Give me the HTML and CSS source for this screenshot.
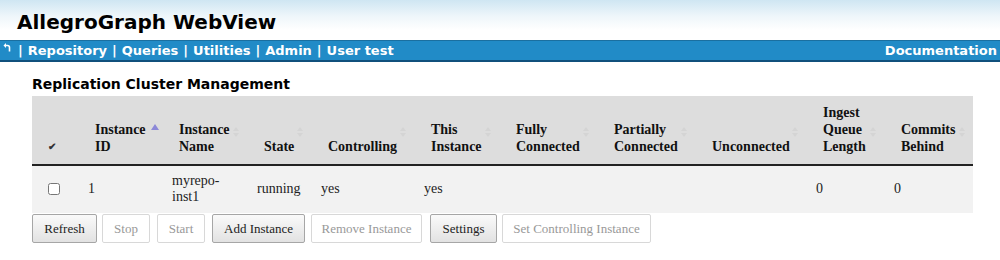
FILE: index.html
```html
<!DOCTYPE html>
<html>
<head>
<meta charset="utf-8">
<link rel="stylesheet" href="styles.css">
</head>
<body>
<header class="top">
  <h1 class="title">AllegroGraph WebView</h1>
</header>
<nav class="menu">
  <div class="menu-left">
    <svg class="back" width="8" height="9" viewBox="0 0 8 9"><path d="M6.5 8.5 V4.5 Q6.5 2.5 4.5 2.5 H2" fill="none" stroke="#fff" stroke-width="1.6"/><path d="M0.5 2.5 L3 0 V5 Z" fill="#fff"/></svg>
    <span class="sep">|</span><a>Repository</a><span class="sep">|</span><a>Queries</a><span class="sep">|</span><a>Utilities</a><span class="sep">|</span><a>Admin</a><span class="sep">|</span><a>User test</a>
  </div>
  <a class="doc">Documentation</a>
</nav>
<main class="content">
  <h2 class="section">Replication Cluster Management</h2>
  <table class="grid">
    <colgroup>
      <col class="c0"><col class="c1"><col class="c2"><col class="c3"><col class="c4"><col class="c5"><col class="c6"><col class="c7"><col class="c8"><col class="c9"><col class="c10">
    </colgroup>
    <thead>
      <tr>
        <th class="chk"><span class="tick">&#10004;</span></th>
        <th class="sorted">Instance<br>ID<span class="asc"></span></th>
        <th>Instance<br>Name<span class="both"></span></th>
        <th>State<span class="both"></span></th>
        <th>Controlling<span class="both"></span></th>
        <th>This<br>Instance<span class="both"></span></th>
        <th>Fully<br>Connected<span class="both"></span></th>
        <th>Partially<br>Connected<span class="both"></span></th>
        <th>Unconnected<span class="both"></span></th>
        <th>Ingest<br>Queue<br>Length<span class="both"></span></th>
        <th>Commits<br>Behind<span class="both"></span></th>
      </tr>
    </thead>
    <tbody>
      <tr>
        <td class="chk"><input type="checkbox"></td>
        <td>1</td>
        <td>myrepo-<br>inst1</td>
        <td>running</td>
        <td>yes</td>
        <td>yes</td>
        <td></td>
        <td></td>
        <td></td>
        <td>0</td>
        <td>0</td>
      </tr>
    </tbody>
  </table>
  <div class="buttons">
    <button class="btn b-refresh">Refresh</button>
    <button class="btn off b-stop">Stop</button>
    <button class="btn off b-start">Start</button>
    <button class="btn b-add">Add Instance</button>
    <button class="btn off b-remove">Remove Instance</button>
    <button class="btn b-settings">Settings</button>
    <button class="btn off b-setctl">Set Controlling Instance</button>
  </div>
</main>
</body>
</html>
```
FILE: styles.css
```css
html, body {
  margin: 0;
  padding: 0;
  background: #fff;
}
body {
  font-family: "DejaVu Sans", Verdana, sans-serif;
  color: #000;
}
.top {
  height: 40px;
  background: linear-gradient(to bottom, #cfe6f2 0px, #eef6fa 16px, #ffffff 30px);
  box-sizing: border-box;
  padding: 10px 0 0 17px;
}
.title {
  margin: 0;
  font-size: 20px;
  line-height: 24px;
  font-weight: bold;
}
.menu {
  height: 19px;
  background: #218bc7;
  border-top: 1px solid #1a6fa0;
  border-bottom: 2px solid #10507c;
  display: flex;
  justify-content: space-between;
  align-items: center;
  color: #fff;
  font-size: 13px;
  font-weight: bold;
  line-height: 19px;
}
.menu-left {
  display: flex;
  align-items: center;
  padding-left: 3px;
}
.back {
  display: block;
  margin-top: -6px;
  margin-right: 2px;
}
.sep {
  margin: 0 5px;
}
.menu a {
  color: #fff;
}
.doc {
  padding-right: 3px;
}
.content {
  padding: 12px 27px 0 32px;
}
.section {
  margin: 0 0 2px 0;
  font-size: 14px;
  line-height: 20px;
  font-weight: bold;
}
.grid {
  table-layout: fixed;
  width: 941px;
  border-collapse: collapse;
  font-family: "Liberation Serif", "Times New Roman", serif;
  font-size: 14px;
}
.c0 { width: 46px; }
.c1 { width: 84px; }
.c2 { width: 85px; }
.c3 { width: 64px; }
.c4 { width: 103px; }
.c5 { width: 85px; }
.c6 { width: 98px; }
.c7 { width: 98px; }
.c8 { width: 111px; }
.c9 { width: 78px; }
.c10 { width: 89px; }
.grid thead tr {
  background: #dddddd;
}
.grid th {
  position: relative;
  text-align: left;
  vertical-align: bottom;
  font-weight: bold;
  line-height: 17px;
  padding: 8px 4px 9px 17px;
  border-bottom: 2px solid #222;
  color: #111;
}
.grid th.chk {
  padding-left: 16px;
}
.tick {
  font-size: 10px;
  color: #333;
}
.asc {
  position: absolute;
  top: 28px;
  left: 73px;
  width: 0;
  height: 0;
  border-left: 4px solid transparent;
  border-right: 4px solid transparent;
  border-bottom: 6px solid #8c88d8;
}
.both {
  position: absolute;
  top: 31px;
  right: 8px;
  width: 0;
  height: 0;
  border-left: 3px solid transparent;
  border-right: 3px solid transparent;
  border-bottom: 4px solid #d4d4d4;
}
.both::after {
  content: "";
  position: absolute;
  top: 6px;
  left: -3px;
  border-left: 3px solid transparent;
  border-right: 3px solid transparent;
  border-top: 4px solid #d4d4d4;
}
.grid tbody tr {
  background: #f2f2f2;
}
.grid td {
  padding: 7px 4px 8px 10px;
  line-height: 16px;
  vertical-align: middle;
  color: #222;
}
.grid td.chk {
  padding-left: 16px;
}
.grid td.chk input {
  margin: 0;
  width: 12px;
  height: 12px;
  display: block;
}
.buttons {
  display: flex;
  gap: 6px;
  margin-top: 1px;
}
.btn {
  height: 29px;
  padding: 0;
  font-family: "Liberation Serif", "Times New Roman", serif;
  font-size: 13px;
  color: #222;
  background: linear-gradient(to bottom, #fafafa, #e2e2e2);
  border: 1px solid #a6a6a6;
  border-radius: 2px;
  text-align: center;
}
.btn.off {
  color: #999;
  background: #fff;
  border-color: #d8d8d8;
}
.b-refresh { width: 65px; }
.b-stop { width: 48px; margin-left: -1px; }
.b-start { width: 48px; margin-left: 1px; }
.b-add { width: 93px; margin-left: 1px; }
.b-remove { width: 111px; }
.b-settings { width: 67px; margin-left: 2px; }
.b-setctl { width: 149px; margin-left: -1px; }
```
